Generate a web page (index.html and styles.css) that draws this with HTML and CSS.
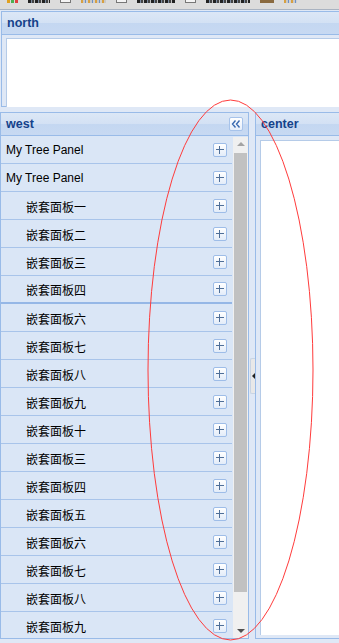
FILE: index.html
```html
<!DOCTYPE html>
<html lang="zh">
<head>
    <meta charset="UTF-8">
    <meta name="viewport" content="width=device-width, initial-scale=1.0">
    <title>Border Layout</title>
    <link rel="stylesheet" href="styles.css">
</head>
<body>
    <div class="bookmarks">
        <span class="bm bm-dots"></span>
        <span class="bm bm-dark" style="width:22px"></span>
        <span class="bm bm-box"></span>
        <span class="bm bm-faint" style="width:25px"></span>
        <span class="bm bm-box"></span>
        <span class="bm bm-dark" style="width:38px"></span>
        <span class="bm bm-box"></span>
        <span class="bm bm-dark" style="width:44px"></span>
        <span class="bm bm-brown"></span>
        <span class="bm bm-faint" style="width:13px"></span>
    </div>

    <div class="viewport">
        <div class="panel north">
            <div class="panel-header">north</div>
            <div class="north-body"><div class="white"></div></div>
        </div>

        <div class="main">
            <div class="panel west">
                <div class="panel-header">
                    <span>west</span>
                    <span class="tool-collapse">
                        <svg width="10" height="8" viewBox="0 0 10 8">
                            <path d="M4.5 0.5 L1.5 4 L4.5 7.5 M8.5 0.5 L5.5 4 L8.5 7.5" fill="none" stroke="#3a6ab0" stroke-width="1.4"/>
                        </svg>
                    </span>
                </div>
                <div class="west-body">
                    <div class="list" id="list"></div>
                    <div class="scrollbar">
                        <div class="arrow up"></div>
                        <div class="thumb"></div>
                        <div class="track"></div>
                        <div class="arrow down"></div>
                    </div>
                </div>
            </div>

            <div class="splitter"><div class="mini"><span></span></div></div>

            <div class="panel center">
                <div class="panel-header">center</div>
                <div class="center-body"><div class="white"></div></div>
            </div>
        </div>
    </div>

    <svg class="annotation" width="339" height="643">
        <ellipse cx="230.5" cy="370" rx="82.5" ry="270" fill="none" stroke="#ff3b3b" stroke-width="1"/>
    </svg>

    <script>
        // Пункти дерева: [назва, з відступом, товста лінія знизу]
        const items = [
            ['My Tree Panel', false],
            ['My Tree Panel', false],
            ['嵌套面板一', true],
            ['嵌套面板二', true],
            ['嵌套面板三', true],
            ['嵌套面板四', true, true],
            ['嵌套面板六', true],
            ['嵌套面板七', true],
            ['嵌套面板八', true],
            ['嵌套面板九', true],
            ['嵌套面板十', true],
            ['嵌套面板三', true],
            ['嵌套面板四', true],
            ['嵌套面板五', true],
            ['嵌套面板六', true],
            ['嵌套面板七', true],
            ['嵌套面板八', true],
            ['嵌套面板九', true]
        ];

        const list = document.getElementById('list');
        items.forEach(([title, indent, thick]) => {
            const row = document.createElement('div');
            row.className = 'row' + (indent ? ' indent' : '') + (thick ? ' thick' : '');

            const label = document.createElement('span');
            label.className = 'label';
            label.textContent = title;
            row.appendChild(label);

            const plus = document.createElement('span');
            plus.className = 'tool-plus';
            row.appendChild(plus);

            list.appendChild(row);
        });
    </script>
</body>
</html>
```

FILE: styles.css
```css
html, body {
    margin: 0;
    padding: 0;
}
body {
    width: 339px;
    height: 643px;
    overflow: hidden;
    position: relative;
    background-color: #dfe8f6;
    font-family: "Liberation Sans", "Noto Sans CJK SC", sans-serif;
    font-size: 12px;
}
.bookmarks {
    height: 9px;
    background-color: #dcdcdc;
    border-bottom: 1px solid #a9b3c1;
    display: flex;
    align-items: flex-start;
    padding-left: 7px;
    overflow: hidden;
}
.bm {
    display: block;
    flex-shrink: 0;
    height: 3px;
    margin-right: 10px;
}
.bm-dots {
    width: 11px;
    background: linear-gradient(90deg, #e0a020 0 3px, transparent 3px 4px, #4caf50 4px 7px, transparent 7px 8px, #e04040 8px 11px);
}
.bm-dark {
    background: repeating-linear-gradient(90deg, #222 0 3px, #7a8aa0 3px 4px, #444 4px 6px, #c0c0c0 6px 7px);
}
.bm-faint {
    background: repeating-linear-gradient(90deg, #d8a040 0 2px, #c8c8c8 2px 4px, #6a90c8 4px 5px, #d0d0d0 5px 7px);
}
.bm-box {
    width: 9px;
    height: 2px;
    border: 1px solid #777;
    border-top: none;
    background: #f4f4f4;
}
.bm-brown {
    width: 14px;
    background-color: #8a6a40;
}

.viewport {
    width: 339px;
    padding-top: 1px;
    overflow: hidden;
}
.panel-header {
    height: 22px;
    border: 1px solid #99bbe8;
    background: linear-gradient(#dce7f6 0, #d3e1f4 50%, #c4d7f1 50%, #c7d9f2 100%);
    color: #15428b;
    font-weight: bold;
    font-size: 12.5px;
    line-height: 22px;
    padding-left: 5px;
    display: flex;
    align-items: center;
}
.north {
    margin-left: 1px;
    width: 350px;
}
.north-body {
    height: 68px;
    border: 1px solid #99bbe8;
    border-top: none;
    padding: 3px 0 0 4px;
}
.white {
    background-color: #fff;
    height: 100%;
    border-left: 1px solid #b5cbe8;
    border-top: 1px solid #b5cbe8;
}
.main {
    display: flex;
    margin-top: 5px;
    height: 527px;
}
.west {
    width: 249px;
    flex-shrink: 0;
    display: flex;
    flex-direction: column;
}
.west .panel-header {
    justify-content: space-between;
    padding-right: 5px;
}
.tool-collapse {
    width: 12px;
    height: 12px;
    border: 1px solid #a7c3ea;
    border-radius: 2px;
    background: linear-gradient(#ffffff, #e6eefa);
    display: flex;
    align-items: center;
    justify-content: center;
}
.west-body {
    flex: 1;
    display: flex;
    border-left: 1px solid #99bbe8;
    border-right: 1px solid #99bbe8;
    border-bottom: 1px solid #99bbe8;
    overflow: hidden;
    background-color: #dae6f6;
}
.list {
    flex: 1;
    overflow: hidden;
}
.row {
    height: 27px;
    border-bottom: 1px solid #a8c4ea;
    background-color: #dae6f6;
    display: flex;
    align-items: center;
    justify-content: space-between;
    padding: 0 5px;
    color: #000;
}
.row.thick {
    height: 26px;
    border-bottom: 2px solid #95b7e6;
}
.row.indent .label {
    padding-left: 20px;
}
.label {
    font-size: 12px;
    padding-top: 1px;
}
.tool-plus {
    position: relative;
    width: 12px;
    height: 12px;
    border: 1px solid #9ebde8;
    border-radius: 2px;
    background: linear-gradient(#ffffff, #e3ecf9);
}
.tool-plus::before,
.tool-plus::after {
    content: "";
    position: absolute;
    background-color: #4f6f98;
}
.tool-plus::before {
    left: 2px;
    top: 5px;
    width: 8px;
    height: 1px;
}
.tool-plus::after {
    left: 5px;
    top: 2px;
    width: 1px;
    height: 8px;
}
.scrollbar {
    width: 15px;
    margin-top: 1px;
    margin-left: 1px;
    background-color: #f0f0f0;
    display: flex;
    flex-direction: column;
    align-items: center;
}
.arrow {
    width: 0;
    height: 0;
    border-left: 4px solid transparent;
    border-right: 4px solid transparent;
}
.arrow.up {
    border-bottom: 4px solid #a3a3a3;
    margin: 5px 0 7px;
}
.arrow.down {
    border-top: 4px solid #505050;
    margin: 10px 0 5px;
}
.thumb {
    width: 13px;
    height: 439px;
    background-color: #c1c1c1;
}
.track {
    flex: 1;
}
.splitter {
    width: 6px;
    flex-shrink: 0;
    display: flex;
    align-items: center;
}
.mini {
    width: 4px;
    height: 34px;
    margin-left: 1px;
    background-color: #e8e8e8;
    border: 1px solid #c8d4e4;
    border-right: none;
    border-radius: 2px 0 0 2px;
    display: flex;
    align-items: center;
    justify-content: center;
}
.mini span {
    width: 0;
    height: 0;
    border-top: 3px solid transparent;
    border-bottom: 3px solid transparent;
    border-right: 3px solid #222;
}
.center {
    width: 100px;
    flex-shrink: 0;
    display: flex;
    flex-direction: column;
}
.center-body {
    flex: 1;
    border: 1px solid #99bbe8;
    border-top: none;
    padding: 4px 0 4px 4px;
}
.annotation {
    position: absolute;
    left: 0;
    top: 0;
    pointer-events: none;
}
```
